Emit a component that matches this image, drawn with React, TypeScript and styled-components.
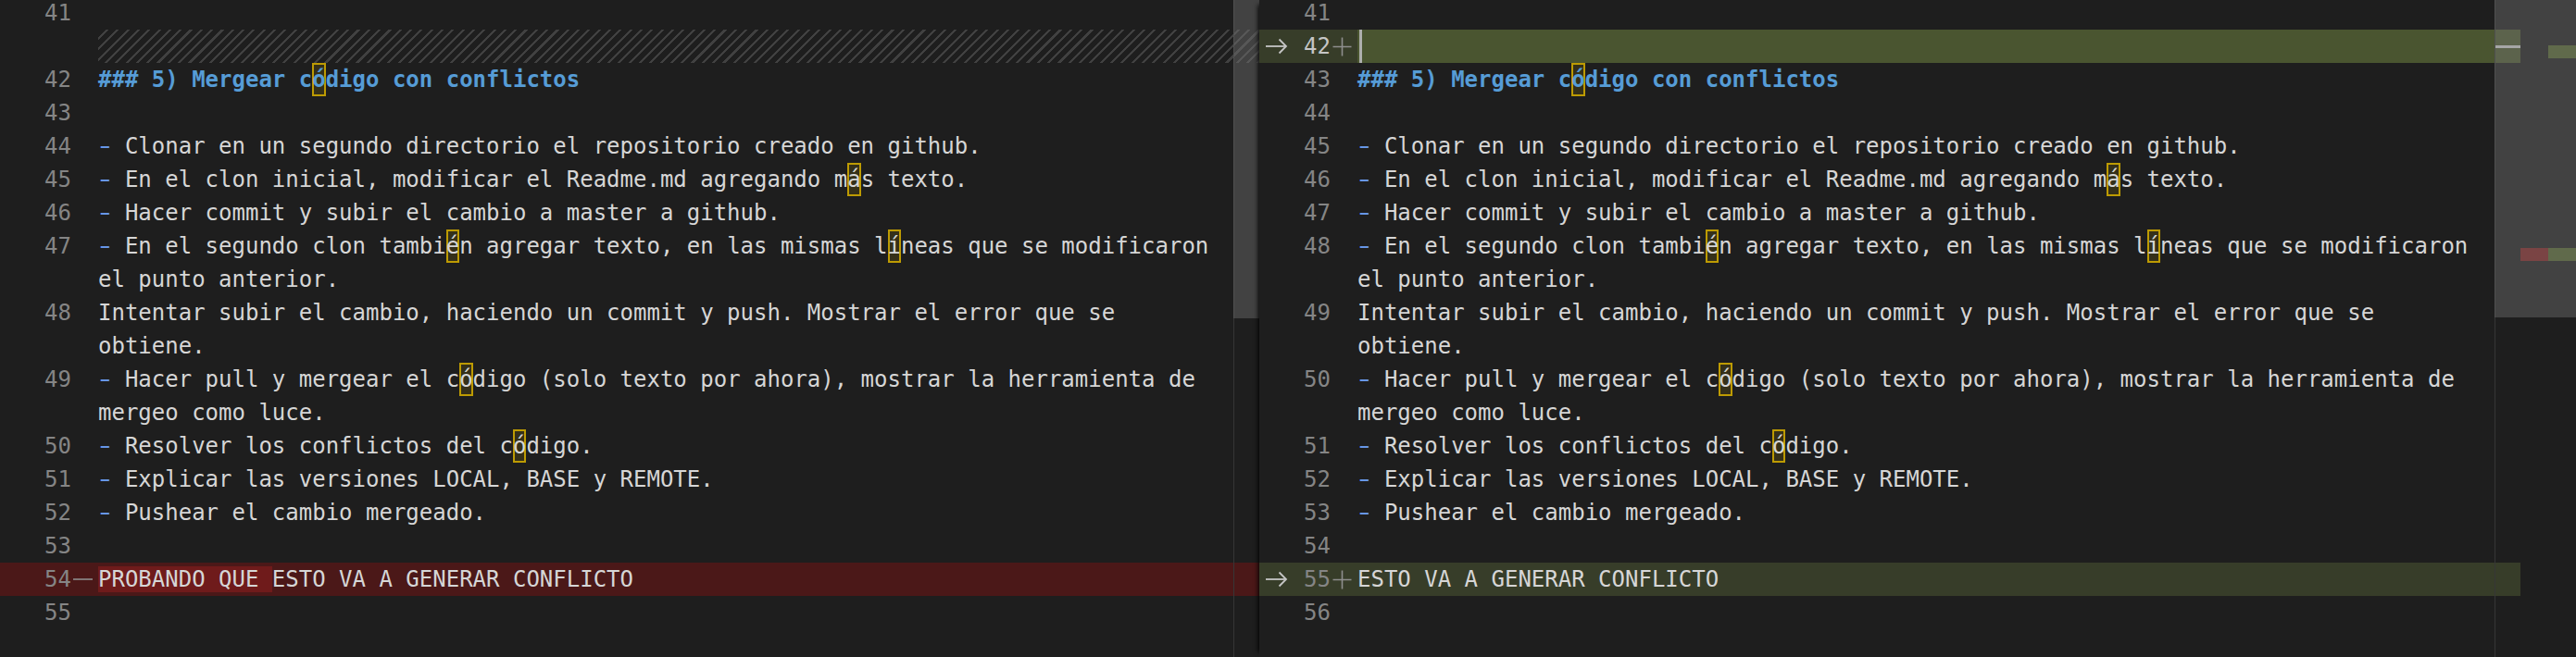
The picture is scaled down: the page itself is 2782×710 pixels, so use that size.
import React from 'react';
import styled, { createGlobalStyle } from 'styled-components';

const GlobalStyle = createGlobalStyle`
  html, body { margin: 0; padding: 0; background: #1e1e1e; }
  #root { width: 2782px; height: 710px; }
`;

type Kind = 'plain' | 'removed' | 'inserted' | 'hatch';

const DiffEditor = styled.div`
  display: flex;
  width: 2782px;
  height: 710px;
  overflow: hidden;
  background: #1e1e1e;
  font-family: 'DejaVu Sans Mono', 'Liberation Mono', monospace;
  font-size: 24px;
  line-height: 36px;
  color: #d6d6d6;
`;

const OriginalPane = styled.div`
  position: relative;
  flex: none;
  width: 1360px;
  height: 100%;
`;

const ModifiedPane = styled.div`
  position: relative;
  z-index: 1;
  display: flex;
  flex: 1;
  height: 100%;
  background: #1e1e1e;
  box-shadow: -6px 0 5px -5px #000;
`;

const EditorArea = styled.div`
  position: relative;
  flex: none;
  width: 1362px;
  height: 100%;
`;

const Lines = styled.div`
  display: flex;
  flex-direction: column;
  margin-top: -4px;
`;

const rowBg: Record<Kind, string> = {
  plain: 'transparent',
  removed: '#4b1818',
  inserted: '#373d29',
  hatch: 'transparent',
};

const Row = styled.div<{ $kind: Kind }>`
  display: flex;
  flex: none;
  height: 36px;
  background: ${(p) => rowBg[p.$kind]};
`;

const Gutter = styled.div`
  display: flex;
  flex: none;
  width: 106px;
  height: 36px;
`;

const ArrowCell = styled.div`
  display: flex;
  align-items: center;
  box-sizing: border-box;
  width: 40px;
  padding-left: 6px;
`;

const LineNumber = styled.div<{ $active?: boolean }>`
  width: 37px;
  text-align: right;
  color: ${(p) => (p.$active ? '#c6c6c6' : '#858585')};
`;

const MarkerCell = styled.div`
  display: flex;
  align-items: center;
  box-sizing: border-box;
  width: 29px;
  padding-left: 2px;
`;

const Code = styled.div<{ $bright?: boolean }>`
  flex: 1;
  height: 36px;
  white-space: pre;
  background: ${(p) => (p.$bright ? '#4a5530' : 'transparent')};
`;

const HatchFill = styled.div`
  flex: 1;
  height: 36px;
  background-image: repeating-linear-gradient(
    -45deg,
    rgba(204, 204, 204, 0.2) 0px,
    rgba(204, 204, 204, 0.2) 2.2px,
    transparent 2.2px,
    transparent 8px
  );
`;

const Heading = styled.span`
  color: #569cd6;
  font-weight: bold;
`;

const Bullet = styled.span`
  display: inline-block;
  color: #6796e6;
  transform: scaleX(1.5);
`;

const Ambiguous = styled.span`
  display: inline-block;
  height: 36px;
  vertical-align: top;
  box-sizing: border-box;
  background: rgba(189, 155, 3, 0.15);
  box-shadow: inset 0 0 0 2px #bd9b03;
`;

const RemovedText = styled.span`
  background: #6f1b1b;
`;

const Cursor = styled.span`
  display: inline-block;
  width: 3px;
  height: 36px;
  margin-left: 2px;
  vertical-align: top;
  background: #aeafad;
`;

const Scrollbar = styled.div`
  position: absolute;
  top: 0;
  right: 0;
  bottom: 0;
  width: 28px;
  box-sizing: border-box;
  border-left: 1px solid #363636;
`;

const Thumb = styled.div<{ $h: number }>`
  height: ${(p) => p.$h}px;
  margin-left: -1px;
  background: rgba(121, 121, 121, 0.4);
`;

const CursorMark = styled.div`
  position: absolute;
  top: 49px;
  left: 0;
  right: 0;
  height: 3px;
  background: #a6a6a6;
`;

const DiffOverview = styled.div`
  position: relative;
  flex: none;
  width: 60px;
  height: 100%;
`;

const OverviewSlider = styled.div`
  height: 343px;
  background: rgba(121, 121, 121, 0.4);
`;

const OverviewMark = styled.div<{ $side: 'left' | 'right'; $top: number; $color: string }>`
  position: absolute;
  top: ${(p) => p.$top}px;
  left: ${(p) => (p.$side === 'left' ? 0 : 30)}px;
  width: 30px;
  height: 14px;
  background: ${(p) => p.$color};
`;

const ArrowIcon = () => (
  <svg width="25" height="18" viewBox="0 0 25 18" fill="none" stroke="#c5c5c5" strokeWidth="1.8">
    <path d="M1 9 H23" />
    <path d="M15.5 1.5 L23 9 L15.5 16.5" />
  </svg>
);

const PlusIcon = () => (
  <svg width="21" height="21" viewBox="0 0 21 21" fill="none" stroke="#8e8e8e" strokeWidth="1.6">
    <path d="M0.5 10.5 H20.5 M10.5 0.5 V20.5" />
  </svg>
);

const MinusIcon = () => (
  <svg width="21" height="4" viewBox="0 0 21 4" fill="none" stroke="#8e8e8e" strokeWidth="1.6">
    <path d="M0 2 H21" />
  </svg>
);

type Seg = string | { amb: string } | { del: string };

type Line = {
  kind: Kind;
  num?: string;
  active?: boolean;
  arrow?: boolean;
  marker?: 'plus' | 'minus';
  heading?: boolean;
  bullet?: boolean;
  cursor?: boolean;
  bright?: boolean;
  segs?: Seg[];
};

const A = (c: string): Seg => ({ amb: c });

const renderSegs = (segs: Seg[] = []) =>
  segs.map((s, i) => {
    if (typeof s === 'string') return <React.Fragment key={i}>{s}</React.Fragment>;
    if ('amb' in s) return <Ambiguous key={i}>{s.amb}</Ambiguous>;
    return <RemovedText key={i}>{s.del}</RemovedText>;
  });

const body: Line[] = [
  { kind: 'plain', num: '', heading: true, segs: ['### 5) Mergear c', A('ó'), 'digo con conflictos'] },
  { kind: 'plain', num: '' },
  { kind: 'plain', num: '', bullet: true, segs: ['Clonar en un segundo directorio el repositorio creado en github.'] },
  { kind: 'plain', num: '', bullet: true, segs: ['En el clon inicial, modificar el Readme.md agregando m', A('á'), 's texto.'] },
  { kind: 'plain', num: '', bullet: true, segs: ['Hacer commit y subir el cambio a master a github.'] },
  {
    kind: 'plain',
    num: '',
    bullet: true,
    segs: ['En el segundo clon tambi', A('é'), 'n agregar texto, en las mismas l', A('í'), 'neas que se modificaron'],
  },
  { kind: 'plain', segs: ['el punto anterior.'] },
  { kind: 'plain', num: '', segs: ['Intentar subir el cambio, haciendo un commit y push. Mostrar el error que se'] },
  { kind: 'plain', segs: ['obtiene.'] },
  {
    kind: 'plain',
    num: '',
    bullet: true,
    segs: ['Hacer pull y mergear el c', A('ó'), 'digo (solo texto por ahora), mostrar la herramienta de'],
  },
  { kind: 'plain', segs: ['mergeo como luce.'] },
  { kind: 'plain', num: '', bullet: true, segs: ['Resolver los conflictos del c', A('ó'), 'digo.'] },
  { kind: 'plain', num: '', bullet: true, segs: ['Explicar las versiones LOCAL, BASE y REMOTE.'] },
  { kind: 'plain', num: '', bullet: true, segs: ['Pushear el cambio mergeado.'] },
  { kind: 'plain', num: '' },
];

const numberBody = (start: number): Line[] => {
  let n = start;
  return body.map((l) => (l.num === '' ? { ...l, num: String(n++) } : l));
};

const original: Line[] = [
  { kind: 'plain', num: '41' },
  { kind: 'hatch' },
  ...numberBody(42),
  { kind: 'removed', num: '54', marker: 'minus', segs: [{ del: 'PROBANDO QUE ' }, 'ESTO VA A GENERAR CONFLICTO'] },
  { kind: 'plain', num: '55' },
];

const modified: Line[] = [
  { kind: 'plain', num: '41' },
  { kind: 'inserted', num: '42', active: true, arrow: true, marker: 'plus', cursor: true, bright: true },
  ...numberBody(43),
  { kind: 'inserted', num: '55', arrow: true, marker: 'plus', segs: ['ESTO VA A GENERAR CONFLICTO'] },
  { kind: 'plain', num: '56' },
];

const EditorLine = ({ line }: { line: Line }) => (
  <Row $kind={line.kind}>
    <Gutter>
      <ArrowCell>{line.arrow && <ArrowIcon />}</ArrowCell>
      <LineNumber $active={line.active}>{line.num}</LineNumber>
      <MarkerCell>
        {line.marker === 'plus' && <PlusIcon />}
        {line.marker === 'minus' && <MinusIcon />}
      </MarkerCell>
    </Gutter>
    {line.kind === 'hatch' ? (
      <HatchFill />
    ) : (
      <Code $bright={line.bright}>
        {line.cursor && <Cursor />}
        {line.bullet && (
          <>
            <Bullet>-</Bullet>{' '}
          </>
        )}
        {line.heading ? <Heading>{renderSegs(line.segs)}</Heading> : renderSegs(line.segs)}
      </Code>
    )}
  </Row>
);

export default function App() {
  return (
    <>
      <GlobalStyle />
      <DiffEditor>
        <OriginalPane>
          <Lines>
            {original.map((l, i) => (
              <EditorLine key={i} line={l} />
            ))}
          </Lines>
          <Scrollbar>
            <Thumb $h={344} />
          </Scrollbar>
        </OriginalPane>
        <ModifiedPane>
          <EditorArea>
            <Lines>
              {modified.map((l, i) => (
                <EditorLine key={i} line={l} />
              ))}
            </Lines>
            <Scrollbar>
              <Thumb $h={343} />
              <CursorMark />
            </Scrollbar>
          </EditorArea>
          <DiffOverview>
            <OverviewSlider />
            <OverviewMark $side="right" $top={49} $color="#606a4b" />
            <OverviewMark $side="left" $top={268} $color="#7a4444" />
            <OverviewMark $side="right" $top={268} $color="#606a4b" />
          </DiffOverview>
        </ModifiedPane>
      </DiffEditor>
    </>
  );
}
